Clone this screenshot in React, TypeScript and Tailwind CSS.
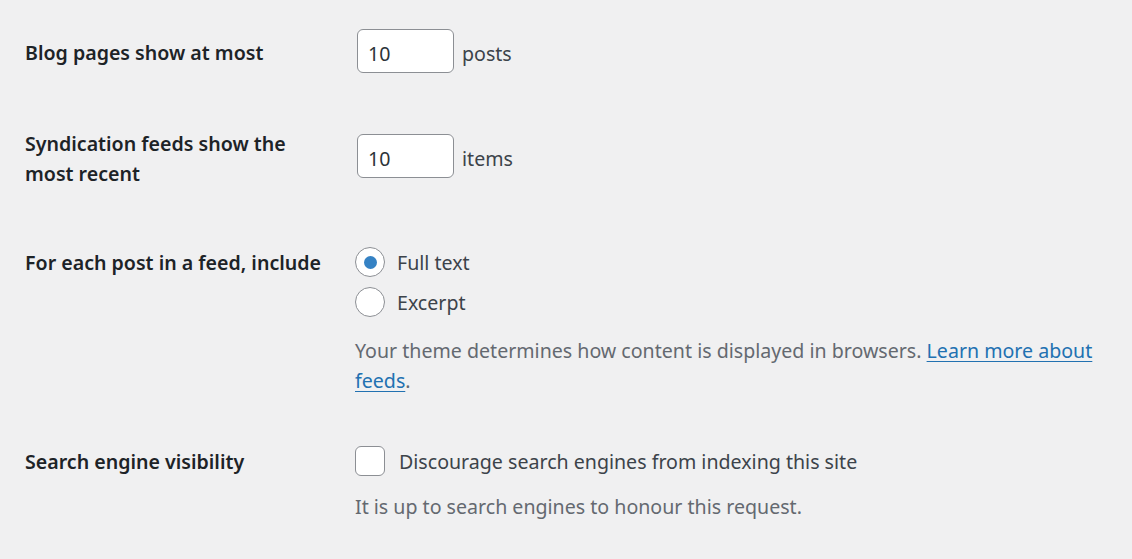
import React from "react";

const font = { fontFamily: '"Noto Sans", "Open Sans", sans-serif' };

export default function App() {
  return (
    <div
      className="min-h-[559px] w-full bg-[#f0f0f1] pl-[25px] pt-[29px] text-[19.6px] leading-[30px] text-[#3c434a]"
      style={font}
    >
      {/* Row 1 */}
      <div className="flex items-start">
        <div className="w-[330px] shrink-0 pt-[9px] font-semibold text-[#1d2327]">
          Blog pages show at most
        </div>
        <div className="flex items-center pl-[2px]">
          <div className="flex h-[44px] w-[97px] items-center rounded-[6px] border border-[#8c8f94] bg-white pl-[10px] pt-[5px] text-[#2c3338]">
            10
          </div>
          <span className="ml-[8px] pt-[5px]">posts</span>
        </div>
      </div>

      {/* Row 2 */}
      <div className="mt-[54px] flex items-start">
        <div className="w-[330px] shrink-0 pt-[2px] font-semibold text-[#1d2327]">
          Syndication feeds show the
          <br />
          most recent
        </div>
        <div className="flex items-center pl-[2px] pt-[7px]">
          <div className="flex h-[44px] w-[97px] items-center rounded-[6px] border border-[#8c8f94] bg-white pl-[10px] pt-[5px] text-[#2c3338]">
            10
          </div>
          <span className="ml-[8px] pt-[5px]">items</span>
        </div>
      </div>

      {/* Row 3 */}
      <div className="mt-[58px] flex items-start">
        <div className="w-[330px] shrink-0 pt-[1px] font-semibold text-[#1d2327]">
          For each post in a feed, include
        </div>
        <div className="flex flex-col">
          <div className="flex h-[30px] items-center">
            <span className="flex h-[30px] w-[30px] items-center justify-center rounded-full border border-[#8c8f94] bg-white">
              <span className="h-[13px] w-[13px] rounded-full bg-[#3582c4]" />
            </span>
            <span className="ml-[12px] pt-[2px] leading-[28px]">Full text</span>
          </div>
          <div className="mt-[10px] flex h-[30px] items-center">
            <span className="h-[30px] w-[30px] rounded-full border border-[#8c8f94] bg-white" />
            <span className="ml-[12px] pt-[2px] leading-[28px]">Excerpt</span>
          </div>
          <p className="mt-[19px] text-[#646970]">
            Your theme determines how content is displayed in browsers.{" "}
            <a className="text-[#2271b1] underline underline-offset-[3px]">
              Learn more about
            </a>
            <br />
            <a className="text-[#2271b1] underline underline-offset-[3px]">feeds</a>.
          </p>
        </div>
      </div>

      {/* Row 4 */}
      <div className="mt-[50px] flex items-start">
        <div className="w-[330px] shrink-0 pt-[1px] font-semibold text-[#1d2327]">
          Search engine visibility
        </div>
        <div className="flex flex-col">
          <div className="flex h-[30px] items-center">
            <span className="h-[30px] w-[30px] rounded-[6px] border border-[#8c8f94] bg-white" />
            <span className="ml-[14px] pt-[2px] leading-[28px]">
              Discourage search engines from indexing this site
            </span>
          </div>
          <p className="mt-[16px] text-[#646970]">
            It is up to search engines to honour this request.
          </p>
        </div>
      </div>
    </div>
  );
}
